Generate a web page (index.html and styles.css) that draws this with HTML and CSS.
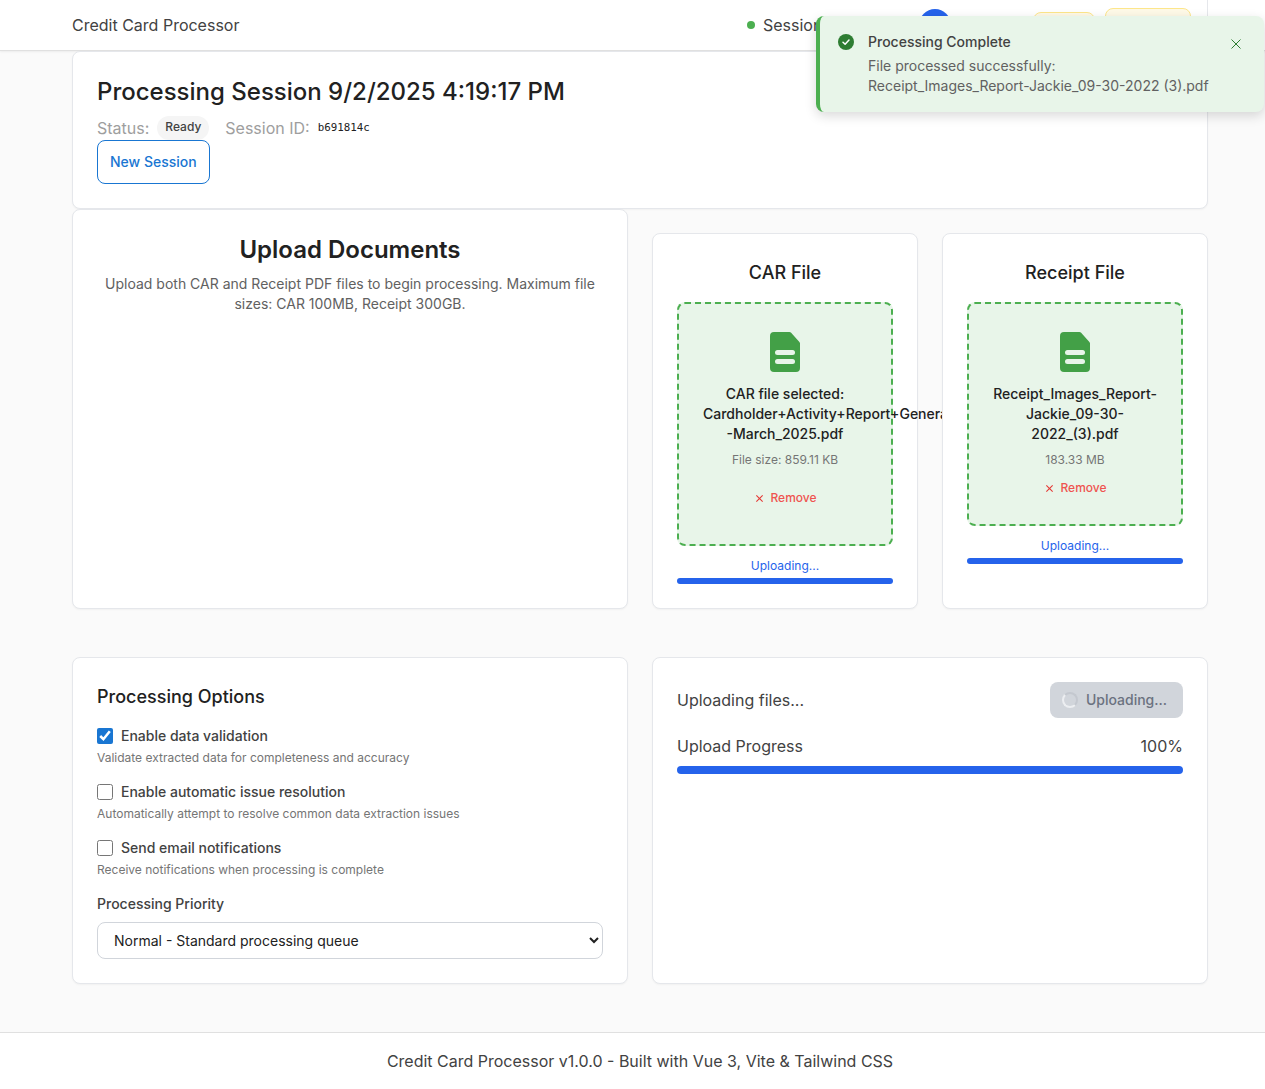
FILE: index.html
```html
<!DOCTYPE html>
<html lang="en">
<head>
    <meta charset="UTF-8">
    <meta name="viewport" content="width=device-width, initial-scale=1.0">
    <title>Credit Card Processor</title>
    <link rel="stylesheet" href="styles.css">
</head>
<body>
    <header class="app-header">
        <div class="header-inner">
            <span class="app-title">Credit Card Processor</span>
            <div class="header-right">
                <span class="session-state"><span class="state-dot"></span>Session Active</span>
                <span class="avatar"></span>
                <span class="pill pill-small"></span>
                <span class="pill pill-large"></span>
            </div>
        </div>
    </header>

    <main class="container">
        <section class="card session-card">
            <h1>Processing Session 9/2/2025 4:19:17 PM</h1>
            <div class="session-meta">
                <span>Status:</span>
                <span class="chip">Ready</span>
                <span class="session-label">Session ID:</span>
                <code>b691814c</code>
            </div>
            <button class="btn-outline">New Session</button>
        </section>

        <div class="upload-grid">
            <section class="card upload-intro">
                <h2>Upload Documents</h2>
                <p>Upload both CAR and Receipt PDF files to begin processing. Maximum file sizes: CAR 100MB, Receipt 300GB.</p>
            </section>
            <div class="upload-files">
                <section class="card file-card">
                    <h3>CAR File</h3>
                    <div class="dropzone">
                        <svg class="file-icon" viewBox="0 0 30 40"><path d="M4 0h15.5a2 2 0 0 1 1.4.6l8.5 9.3a2 2 0 0 1 .6 1.4V36a4 4 0 0 1-4 4H4a4 4 0 0 1-4-4V4a4 4 0 0 1 4-4z" fill="#43a047"/><rect x="5" y="18" width="20" height="5" rx="2.5" fill="#e8f5e9"/><rect x="5" y="27" width="20" height="5" rx="2.5" fill="#e8f5e9"/></svg>
                        <p class="file-name">CAR file selected:<br>Cardholder+Activity+Report+General<br>-March_2025.pdf</p>
                        <p class="file-size">File size: 859.11 KB</p>
                        <button class="btn-remove btn-remove-spaced"><svg viewBox="0 0 10 10"><path d="M1.5 1.5l7 7M8.500 1.5l-7 7"/></svg>Remove</button>
                    </div>
                    <p class="upload-note">Uploading...</p>
                    <div class="bar bar-thin"></div>
                </section>
                <section class="card file-card">
                    <h3>Receipt File</h3>
                    <div class="dropzone">
                        <svg class="file-icon" viewBox="0 0 30 40"><path d="M4 0h15.5a2 2 0 0 1 1.4.6l8.5 9.3a2 2 0 0 1 .6 1.4V36a4 4 0 0 1-4 4H4a4 4 0 0 1-4-4V4a4 4 0 0 1 4-4z" fill="#43a047"/><rect x="5" y="18" width="20" height="5" rx="2.5" fill="#e8f5e9"/><rect x="5" y="27" width="20" height="5" rx="2.5" fill="#e8f5e9"/></svg>
                        <p class="file-name">Receipt_Images_Report-Jackie_09-30-2022_(3).pdf</p>
                        <p class="file-size">183.33 MB</p>
                        <button class="btn-remove"><svg viewBox="0 0 10 10"><path d="M1.5 1.5l7 7M8.500 1.5l-7 7"/></svg>Remove</button>
                    </div>
                    <p class="upload-note">Uploading...</p>
                    <div class="bar bar-thin"></div>
                </section>
            </div>
        </div>

        <div class="options-grid">
            <section class="card options-card">
                <h3>Processing Options</h3>
                <label class="check-row">
                    <input type="checkbox" checked>
                    <span>Enable data validation</span>
                </label>
                <p class="check-desc">Validate extracted data for completeness and accuracy</p>
                <label class="check-row">
                    <input type="checkbox">
                    <span>Enable automatic issue resolution</span>
                </label>
                <p class="check-desc">Automatically attempt to resolve common data extraction issues</p>
                <label class="check-row">
                    <input type="checkbox">
                    <span>Send email notifications</span>
                </label>
                <p class="check-desc">Receive notifications when processing is complete</p>
                <label class="select-label" for="priority">Processing Priority</label>
                <select id="priority">
                    <option>Normal - Standard processing queue</option>
                </select>
            </section>
            <section class="card progress-card">
                <div class="progress-head">
                    <span>Uploading files...</span>
                    <button class="btn-busy"><span class="spinner"></span>Uploading...</button>
                </div>
                <div class="progress-label">
                    <span>Upload Progress</span>
                    <span>100%</span>
                </div>
                <div class="bar"></div>
            </section>
        </div>
    </main>

    <footer class="app-footer">Credit Card Processor v1.0.0 - Built with Vue 3, Vite &amp; Tailwind CSS</footer>

    <div class="toast">
        <svg class="toast-icon" viewBox="0 0 16 16"><circle cx="8" cy="8" r="8" fill="#2e7d32"/><path d="M5 8.300l2.100 2L11 6" fill="none" stroke="#fff" stroke-width="1.500" stroke-linecap="round" stroke-linejoin="round"/></svg>
        <div class="toast-body">
            <div class="toast-title">Processing Complete</div>
            <div class="toast-text">File processed successfully:<br>Receipt_Images_Report-Jackie_09-30-2022 (3).pdf</div>
        </div>
        <svg class="toast-close" viewBox="0 0 10 10"><path d="M.5.5l9 9M9.500.5l-9 9"/></svg>
    </div>
</body>
</html>
```

FILE: styles.css
```css
* {
    box-sizing: border-box;
}
html {
    overflow-x: hidden;
}
body {
    width: 1280px;
    margin: 0;
    font-family: Inter, "Liberation Sans", sans-serif;
    font-size: 16px;
    color: #212121;
    background: #fafafa;
}
h1, h2, h3, p {
    margin: 0;
}
button {
    font-family: inherit;
}

.app-header {
    height: 51px;
    background: #fff;
    border-bottom: 1px solid #e0e0e0;
    box-shadow: 0 1px 2px rgba(0, 0, 0, 0.06);
}
.header-inner {
    width: 1136px;
    height: 50px;
    margin: 0 auto;
    padding-right: 16px;
    display: flex;
    align-items: center;
    justify-content: space-between;
    border-right: 1px solid #e5e7eb;
}
.app-title {
    font-size: 16px;
    color: #424242;
}
.header-right {
    display: flex;
    align-items: center;
}
.session-state {
    display: flex;
    align-items: center;
    width: 172px;
    color: #424242;
}
.state-dot {
    width: 8px;
    height: 8px;
    margin-right: 8px;
    border-radius: 50%;
    background: #4caf50;
}
.avatar {
    width: 32px;
    height: 32px;
    border-radius: 50%;
    background: #2563eb;
}
.pill {
    border: 1px solid #fde68a;
    border-radius: 8px;
    background: #fef9e7;
}
.pill-small {
    width: 62px;
    height: 26px;
    margin-left: 82px;
}
.pill-large {
    width: 86px;
    height: 34px;
    margin-left: 10px;
}

.container {
    width: 1136px;
    margin: 0 auto;
}
.card {
    position: relative;
    padding: 24px;
    background: #fff;
    border: 1px solid #e5e7eb;
    border-radius: 8px;
    box-shadow: 0 1px 2px rgba(0, 0, 0, 0.04);
}

.session-card {
    height: 158px;
}
.session-card h1 {
    font-size: 24px;
    line-height: 32px;
    font-weight: 500;
    color: #212121;
}
.session-meta {
    display: flex;
    align-items: center;
    height: 24px;
    margin-top: 8px;
    color: #9e9e9e;
}
.chip {
    margin-left: 8px;
    padding: 3px 8px 5px;
    font-size: 12px;
    line-height: 16px;
    font-weight: 500;
    color: #424242;
    background: #f5f5f5;
    border-radius: 12px;
}
.session-label {
    margin-left: 16px;
}
code {
    margin: -2px 0 0 8px;
    font-family: "DejaVu Sans Mono", monospace;
    font-size: 10.800px;
    color: #212121;
}
.btn-outline {
    display: block;
    height: 44px;
    padding: 0 12px 2px;
    font-size: 14px;
    font-weight: 500;
    color: #1976d2;
    background: #fff;
    border: 1px solid #1976d2;
    border-radius: 8px;
}

.upload-grid,
.options-grid {
    display: grid;
    grid-template-columns: minmax(0, 1fr) minmax(0, 1fr);
    gap: 24px;
}
.upload-grid {
    height: 399px;
}
.upload-intro {
    text-align: center;
}
.upload-intro h2 {
    font-size: 24px;
    line-height: 32px;
    font-weight: 600;
}
.upload-intro p {
    margin-top: 8px;
    font-size: 14px;
    line-height: 20px;
    color: #616161;
}
.upload-files {
    display: grid;
    grid-template-columns: minmax(0, 1fr) minmax(0, 1fr);
    gap: 24px;
    padding-top: 24px;
}
.file-card {
    text-align: center;
}
.file-card h3 {
    padding-top: 1px;
    font-size: 18px;
    line-height: 28px;
    font-weight: 500;
    margin-bottom: 15px;
}
.dropzone {
    padding: 28px 24px 27px;
    background: #e8f5e9;
    border: 2px dashed #4caf50;
    border-radius: 8px;
}
.file-icon {
    display: block;
    width: 30px;
    height: 40px;
    margin: 0 auto 12px;
}
.file-name {
    font-size: 14px;
    line-height: 20px;
    font-weight: 500;
    color: #212121;
}
.file-size {
    margin-top: 8px;
    font-size: 12px;
    line-height: 16px;
    color: #757575;
}
.btn-remove {
    display: inline-flex;
    align-items: center;
    gap: 6px;
    margin-top: 12px;
    padding: 0 0 0 2px;
    font-size: 12px;
    line-height: 16px;
    font-weight: 500;
    color: #ef5350;
    background: none;
    border: 0;
}
.btn-remove-spaced {
    margin: 22px 0 11px;
}
.btn-remove svg {
    width: 9px;
    height: 9px;
    fill: none;
    stroke: #e53935;
    stroke-width: 1.200;
}
.upload-note {
    margin: 12px 0 4px;
    font-size: 12px;
    line-height: 16px;
    color: #2563eb;
}
.bar {
    height: 8px;
    background: #2563eb;
    border-radius: 4px;
}
.bar-thin {
    height: 6px;
}

.options-grid {
    height: 327px;
    margin-top: 49px;
}
.options-card h3 {
    padding-top: 1px;
    margin-bottom: 15px;
    font-size: 18px;
    line-height: 28px;
    font-weight: 500;
}
.check-row {
    display: flex;
    align-items: center;
    gap: 8px;
    height: 20px;
    font-size: 14px;
    font-weight: 500;
    color: #424242;
}
.check-row span {
    margin-top: -2px;
}
.check-row input {
    width: 16px;
    height: 16px;
    margin: 0;
    accent-color: #1976d2;
}
.check-desc {
    margin: 4px 0 16px;
    font-size: 12px;
    line-height: 16px;
    color: #757575;
}
.select-label {
    display: block;
    font-size: 14px;
    line-height: 20px;
    font-weight: 500;
    color: #424242;
}
select {
    display: block;
    width: 100%;
    height: 37px;
    margin-top: 8px;
    padding: 0 12px;
    font-family: inherit;
    font-size: 14px;
    color: #212121;
    background: #fff;
    border: 1px solid #d1d5db;
    border-radius: 8px;
}

.progress-head {
    display: flex;
    align-items: center;
    justify-content: space-between;
    color: #424242;
}
.btn-busy {
    display: flex;
    align-items: center;
    gap: 8px;
    height: 36px;
    padding: 0 16px 2px 12px;
    font-size: 14px;
    font-weight: 500;
    color: #6b7280;
    background: #d1d5db;
    border: 0;
    border-radius: 8px;
}
.spinner {
    width: 16px;
    height: 16px;
    margin-top: 2px;
    border: 2px solid #c4c8cf;
    border-left-color: #eceef1;
    border-bottom-color: #eceef1;
    border-radius: 50%;
}
.progress-label {
    display: flex;
    justify-content: space-between;
    margin: 18px 0 10px;
    line-height: 20px;
    color: #424242;
}

.app-footer {
    height: 57px;
    margin-top: 48px;
    padding-top: 18px;
    text-align: center;
    color: #424242;
    background: #fff;
    border-top: 1px solid #e0e0e0;
}

.toast {
    position: absolute;
    top: 16px;
    left: 816px;
    display: flex;
    width: 448px;
    height: 96px;
    padding: 18px 23px 0 18px;
    background: #e8f5e9;
    border-left: 4px solid #4caf50;
    border-radius: 8px;
    box-shadow: 0 4px 12px rgba(0, 0, 0, 0.15);
}
.toast-icon {
    width: 16px;
    height: 16px;
    margin-right: 14px;
    flex: none;
}
.toast-body {
    flex: 1;
    font-size: 14px;
    line-height: 20px;
}
.toast-title {
    margin-top: -2px;
    font-weight: 500;
    color: #424242;
}
.toast-text {
    margin-top: 4px;
    color: #616161;
}
.toast-close {
    width: 10px;
    height: 10px;
    margin-top: 5px;
    flex: none;
    fill: none;
    stroke: #2e7d32;
    stroke-width: 1;
}
```
